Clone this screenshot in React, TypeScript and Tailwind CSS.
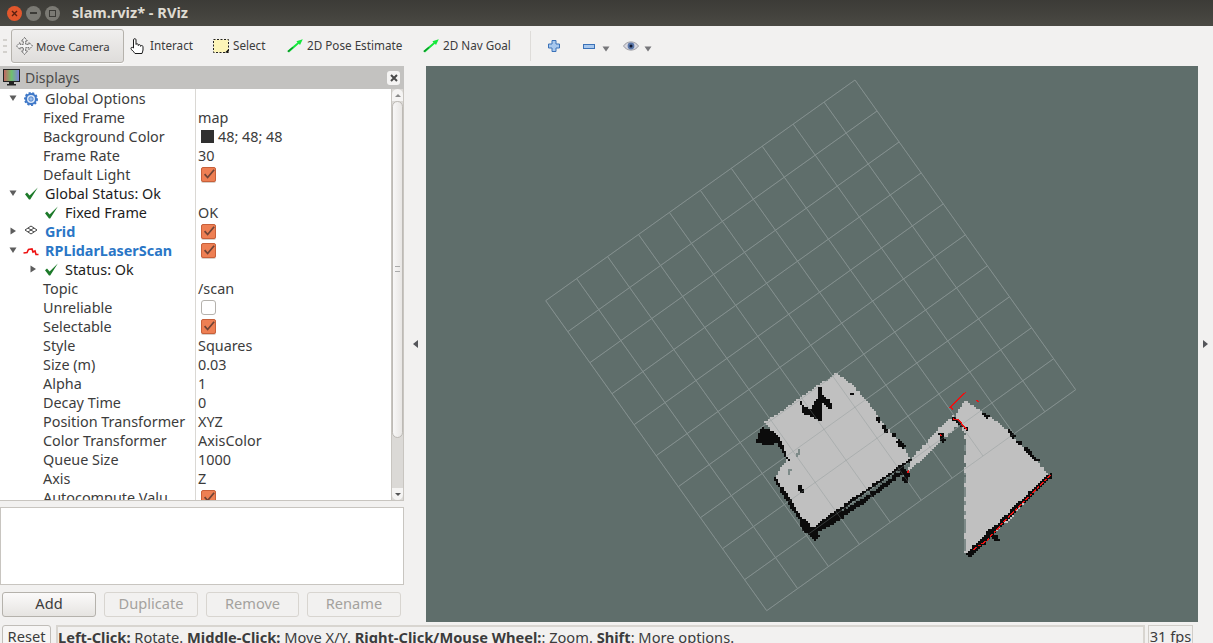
import React from "react";

const Check = () => (
  <svg width="15" height="14" viewBox="0 0 15 14" className="shrink-0">
    <path d="M1 7.2 L3 5.6 L5.6 8.6 L13.8 0.5 L6.2 12.6 L5 12.6 Z" fill="#1d7a2a" />
  </svg>
);

const Arrow = ({ open }: { open: boolean }) => (
  <svg width="8" height="8" viewBox="0 0 8 8" className="shrink-0">
    {open ? <path d="M0.5 1.5 H7.5 L4 7 Z" fill="#5d5d5d" /> : <path d="M1.5 0.5 V7.5 L7 4 Z" fill="#5d5d5d" />}
  </svg>
);

const Gear = () => (
  <svg width="14" height="14" viewBox="0 0 14 14" className="shrink-0">
    <circle cx="7" cy="7" r="5" fill="#dce8f8" stroke="#3f78c8" strokeWidth="2" />
    <circle cx="7" cy="7" r="6" fill="none" stroke="#3f78c8" strokeWidth="2" strokeDasharray="2 1.6" />
    <circle cx="7" cy="7" r="2.2" fill="#9cbcea" stroke="#3f78c8" strokeWidth="0.8" />
  </svg>
);

const GridIcon = () => (
  <svg width="14" height="10" viewBox="0 0 14 10" className="shrink-0">
    <path d="M7 1 L13 5 L7 9 L1 5 Z M4 3 L10 7 M10 3 L4 7" fill="none" stroke="#444" strokeWidth="1" />
  </svg>
);

const Laser = () => (
  <svg width="16" height="12" viewBox="0 0 16 12" className="shrink-0">
    <path d="M0.5 9 L4 8.5 L5.5 5.5 L9 5 L10 8 L12 7 L13 10.5 L15.5 10.5" fill="none" stroke="#ee1111" strokeWidth="1.6" />
  </svg>
);

const Box = ({ on = true }: { on?: boolean }) =>
  on ? (
    <span className="ml-[3px] flex h-[15px] w-[15px] items-center justify-center rounded-[2px] border border-[#c8603a] bg-[#ee7f53] shadow-[0_1px_0_#d8cfc8]">
      <svg width="15" height="15" viewBox="0 0 15 15">
        <path d="M3 7 L6.5 11 L14 2" fill="none" stroke="#6f4436" strokeWidth="2" />
      </svg>
    </span>
  ) : (
    <span className="ml-[3px] block h-[15px] w-[15px] rounded-[3px] border border-[#b5b2ad] bg-white" />
  );

type Row = {
  label: string;
  indent: number;
  arrow?: "open" | "closed";
  arrowAt?: number;
  icon?: React.ReactNode;
  value?: React.ReactNode;
  cls?: string;
};

const rows: Row[] = [
  { label: "Global Options", indent: 45, arrow: "open", arrowAt: 9, icon: <Gear /> },
  { label: "Fixed Frame", indent: 43, value: "map" },
  {
    label: "Background Color",
    indent: 43,
    value: (
      <span className="flex items-center gap-[4px] pl-[3px]">
        <span className="block h-[13px] w-[13px] bg-[#303030]" />
        48; 48; 48
      </span>
    ),
  },
  { label: "Frame Rate", indent: 43, value: "30" },
  { label: "Default Light", indent: 43, value: <Box /> },
  { label: "Global Status: Ok", indent: 45, arrow: "open", arrowAt: 9, icon: <Check />, cls: "text-[#1c1c1c]" },
  { label: "Fixed Frame", indent: 65, icon: <Check />, value: "OK", cls: "text-[#1c1c1c]" },
  { label: "Grid", indent: 45, arrow: "closed", arrowAt: 9, icon: <GridIcon />, value: <Box />, cls: "font-bold text-[#2a76c6]" },
  { label: "RPLidarLaserScan", indent: 45, arrow: "open", arrowAt: 9, icon: <Laser />, value: <Box />, cls: "font-bold text-[#2a76c6]" },
  { label: "Status: Ok", indent: 65, arrow: "closed", arrowAt: 29, icon: <Check />, cls: "text-[#1c1c1c]" },
  { label: "Topic", indent: 43, value: "/scan" },
  { label: "Unreliable", indent: 43, value: <Box on={false} /> },
  { label: "Selectable", indent: 43, value: <Box /> },
  { label: "Style", indent: 43, value: "Squares" },
  { label: "Size (m)", indent: 43, value: "0.03" },
  { label: "Alpha", indent: 43, value: "1" },
  { label: "Decay Time", indent: 43, value: "0" },
  { label: "Position Transformer", indent: 43, value: "XYZ" },
  { label: "Color Transformer", indent: 43, value: "AxisColor" },
  { label: "Queue Size", indent: 43, value: "1000" },
  { label: "Axis", indent: 43, value: "Z" },
  { label: "Autocompute Valu", indent: 43, value: <Box /> },
];

const TreeRow = ({ r }: { r: Row }) => {
  const iconLeft = r.indent === 65 ? 44 : r.label === "RPLidarLaserScan" ? 23 : 24;
  return (
    <div className="flex h-[19px] shrink-0 items-center">
      <div className={"relative flex h-[19px] w-[195px] shrink-0 items-center whitespace-nowrap " + (r.cls ?? "")} style={{ paddingLeft: r.indent }}>
        {r.arrow && (
          <span className="absolute top-[5px]" style={{ left: r.arrowAt }}>
            <Arrow open={r.arrow === "open"} />
          </span>
        )}
        {r.icon && (
          <span className="absolute top-[3px]" style={{ left: iconLeft }}>
            {r.icon}
          </span>
        )}
        {r.label}
      </div>
      <div className="flex h-[19px] flex-1 items-center border-l border-[#dad8d4] pl-[2px]">{r.value}</div>
    </div>
  );
};

const PoseArrow = () => (
  <svg width="16" height="14" viewBox="0 0 16 14" className="shrink-0">
    <path d="M0.5 11.8 L10.5 3.6 L9.4 2.2 L15.8 0.2 L13 6 L11.9 4.7 L2 13.5 Z" fill="#16e83c" />
    <path d="M0.8 12.8 L6 8.4" stroke="#0e8a2a" strokeWidth="1.2" />
  </svg>
);

const ToolItem = ({ w, icon, label }: { w: string; icon: React.ReactNode; label: string }) => (
  <div className={"flex h-[34px] shrink-0 items-center gap-[4px] " + w}>
    {icon}
    <span className="whitespace-nowrap">{label}</span>
  </div>
);

const SmallDown = () => (
  <svg width="8" height="6" viewBox="0 0 8 6" className="mt-[6px] shrink-0">
    <path d="M0.5 0.5 H7.5 L4 5.5 Z" fill="#77777a" />
  </svg>
);

const Btn = ({ label, w, off }: { label: string; w: string; off?: boolean }) => (
  <div
    className={
      "flex h-[25px] items-center justify-center rounded-[3px] border " +
      w +
      (off
        ? " border-[#d8d5d0] bg-[#f2f1f0] text-[#a4a29e]"
        : " border-[#b5b2ac] bg-gradient-to-b from-[#fbfafa] to-[#e6e4e1] text-[#3c3c3c]")
    }
  >
    {label}
  </div>
);

const gridLines = () => {
  const T = [855, 81];
  const L = [545.7, 301.7];
  const B = [766.7, 611.7];
  const R = [1075.7, 390.7];
  const out: string[] = [];
  for (let i = 0; i <= 10; i++) {
    const t = i / 10;
    const a = [L[0] + (T[0] - L[0]) * t, L[1] + (T[1] - L[1]) * t];
    const b = [B[0] + (R[0] - B[0]) * t, B[1] + (R[1] - B[1]) * t];
    out.push(`M${a[0] - 426} ${a[1] - 67} L${b[0] - 426} ${b[1] - 67}`);
    const c = [L[0] + (B[0] - L[0]) * t, L[1] + (B[1] - L[1]) * t];
    const d = [T[0] + (R[0] - T[0]) * t, T[1] + (R[1] - T[1]) * t];
    out.push(`M${c[0] - 426} ${c[1] - 67} L${d[0] - 426} ${d[1] - 67}`);
  }
  return out.join(" ");
};

type Pt = number[];
const hash = (x: number, y: number) => {
  const s = Math.sin(x * 12.9898 + y * 78.233) * 43758.5453;
  return s - Math.floor(s);
};
const inPoly = (x: number, y: number, p: Pt[]) => {
  let c = false;
  for (let i = 0, j = p.length - 1; i < p.length; j = i++) {
    const [xi, yi] = p[i];
    const [xj, yj] = p[j];
    if (yi > y !== yj > y && x < ((xj - xi) * (y - yi)) / (yj - yi) + xi) c = !c;
  }
  return c;
};
const segHit = (x: number, y: number, s: number[]) => {
  const [x1, y1, x2, y2, r, dens] = s;
  const dx = x2 - x1;
  const dy = y2 - y1;
  const len2 = dx * dx + dy * dy;
  const t = Math.max(0, Math.min(1, ((x - x1) * dx + (y - y1) * dy) / len2));
  const d = Math.hypot(x - (x1 + t * dx), y - (y1 + t * dy));
  if (d > r) return false;
  const chunk = Math.floor((t * Math.sqrt(len2)) / 14);
  return hash(chunk + x1, chunk * 3 + y1) < dens;
};

const light: Pt[][] = [
  [[288,42],[345,85],[395,145],[430,190],[470,240],[515,300],[480,330],[340,420],[222,525],[185,490],[105,358],[140,300],[75,190]],
  [[500,342],[515,300],[600,205],[640,172],[662,192],[612,240],[520,325]],
  [[640,178],[675,125],[735,165],[800,210],[930,350],[810,480],[690,590],[672,580],[675,225],[660,200]],
];
const blackPolys: Pt[][] = [
  [[235,85],[245,88],[245,105],[270,125],[278,148],[262,150],[248,130],[245,185],[228,180],[205,170],[188,160],[180,122],[195,145],[210,150],[225,130],[235,110]],
  [[65,205],[100,215],[120,240],[150,310],[135,295],[110,250],[90,260],[60,255],[48,250],[55,225]],
  [[330,98],[344,102],[340,112],[330,108]],
  [[598,222],[608,225],[618,245],[608,252],[596,235]],
];
const blackSegs: number[][] = [
  [105,358,125,390,5,0.8],[125,390,190,495,6,0.95],[335,425,512,302,4,1],[240,495,330,430,5,1],
  [215,520,300,470,11,1],[300,470,400,405,7,0.9],[400,405,490,335,6,1],[190,495,225,530,13,1],
  [395,155,440,215,7,0.55],[440,200,495,270,7,0.6],[795,205,905,320,6,0.65],
  [930,350,850,425,6,1],[850,425,760,515,7,1],[760,515,690,585,9,1],[640,178,682,212,5,1],
  [489,358,497,366,5,1],[178,385,186,393,6,1],[485,330,499,350,9,1],[735,168,742,174,6,1],[752,520,768,540,8,1],
];
const holeSegs: number[][] = [
  [187,256,145,345,3.5,0.6],[672,230,674,570,4.5,0.55],
];

const buildMap = () => {
  const cell = 6;
  let lightPath = "";
  let blackPath = "";
  let holePath = "";
  for (let y = 36; y < 600; y += cell) {
    for (let x = 42; x < 942; x += cell) {
      const cx = x + cell / 2 + (hash(x, y) - 0.5) * 4;
      const cy = y + cell / 2 + (hash(y, x) - 0.5) * 4;
      const rect = `M${x} ${y}h${cell}v${cell}h${-cell}z`;
      const isBlack = blackPolys.some((p) => inPoly(cx, cy, p)) || blackSegs.some((s) => segHit(cx, cy, s));
      if (isBlack) {
        blackPath += rect;
        continue;
      }
      if (light.some((p) => inPoly(cx, cy, p))) {
        if (holeSegs.some((s) => segHit(x + 3, y + 3, s))) holePath += rect;
        else lightPath += rect;
      }
    }
  }
  return { lightPath, blackPath, holePath };
};
const mapPaths = buildMap();

const MapDrawing = () => (
  <svg width="772" height="555" viewBox="0 0 772 555" className="block">
    <path d={gridLines()} fill="none" stroke="#84908e" strokeWidth="1" />
    <g transform="translate(314 293) scale(0.33333)" shapeRendering="crispEdges">
      <path d={mapPaths.lightPath} fill="#c0c0c0" />
      <path d={mapPaths.holePath} fill="#7d8a88" />
      <path d={mapPaths.blackPath} fill="#0c0c0c" />
    </g>
    <path d={gridLines()} fill="none" stroke="#84908e" strokeWidth="1" opacity="0.35" />
    <g transform="translate(314 293) scale(0.33333)" shapeRendering="crispEdges">
      <g fill="none" stroke="#ee1111" strokeWidth="4">
        <path d="M678 99 L631 145 L640 152" />
        <path d="M710 122 L716 130" />
        <path d="M638 180 L655 182 L680 212" />
        <path d="M505 332 L504 342" />
        <path d="M932 348 L880 400 L820 460 L790 490 L740 545 L700 572" strokeDasharray="14 4 8 5" />
        <path d="M600 226 L604 232" />
      </g>
    </g>
  </svg>
);

export default function App() {
  return (
    <div className="flex h-[643px] w-[1213px] flex-col overflow-hidden bg-[#f2f1f0] font-['Noto_Sans',sans-serif] text-[14.4px] text-[#3c3c3c]">
      {/* title bar */}
      <div className="flex h-[26px] shrink-0 items-center bg-gradient-to-b from-[#3c3b37] to-[#4a4943] pl-[7px]">
        <span className="flex h-[15px] w-[15px] items-center justify-center rounded-full bg-[#e2572c] text-white">
          <svg width="7" height="7" viewBox="0 0 7 7"><path d="M1 1 L6 6 M6 1 L1 6" stroke="#5a2010" strokeWidth="1.4" /></svg>
        </span>
        <span className="ml-[4px] flex h-[15px] w-[15px] items-center justify-center rounded-full bg-[#7b7a74]">
          <span className="block h-[1.5px] w-[7px] bg-[#3c3b37]" />
        </span>
        <span className="ml-[4px] flex h-[15px] w-[15px] items-center justify-center rounded-full bg-[#7b7a74]">
          <span className="block h-[7px] w-[7px] border border-[#3c3b37]" />
        </span>
        <span className="ml-[12px] text-[14.6px] font-bold text-[#dfdbd2]">slam.rviz* - RViz</span>
      </div>

      {/* toolbar */}
      <div className="flex h-[40px] shrink-0 items-center pl-[3px] text-[11.7px]">
        <div className="flex h-[14px] w-[8px] shrink-0 flex-col justify-between">
          <span className="block h-[2px] w-[4px] bg-[#d3d1cd]" />
          <span className="block h-[2px] w-[4px] bg-[#d3d1cd]" />
          <span className="block h-[2px] w-[4px] bg-[#d3d1cd]" />
        </div>
        <div className="flex h-[34px] w-[113px] shrink-0 items-center gap-[3px] rounded-[3px] border border-[#b5b2ac] bg-gradient-to-b from-[#f0efee] to-[#dfdddb] pl-[4px] pr-0 shadow-[0_1px_0_#fff]">
          <svg width="17" height="18" viewBox="0 0 17 18" className="shrink-0">
            <path d="M8.5 0.5 L11.5 4 H9.7 V7.3 H13 V5.5 L16.5 9 L13 12.5 V10.7 H9.7 V14 H11.5 L8.5 17.5 L5.5 14 H7.3 V10.7 H4 V12.5 L0.5 9 L4 5.5 V7.3 H7.3 V4 H5.5 Z" fill="#f4f4f4" stroke="#555" strokeWidth="0.9" strokeDasharray="2 0.6" />
          </svg>
          <span className="mt-[2px] whitespace-nowrap text-[11.4px]">Move Camera</span>
        </div>
        <div className="w-[6px] shrink-0" />
        <ToolItem
          w="w-[83px]"
          label="Interact"
          icon={
            <svg width="16" height="16" viewBox="0 0 16 16" className="shrink-0">
              <path d="M3.5 10 V1.8 C3.5 0.3 6 0.3 6 1.8 V6.5 C6 5.5 8.3 5.5 8.3 6.8 V7.5 C8.3 6.3 10.6 6.3 10.6 7.8 V8.3 C10.6 7.2 13 7.2 13 8.8 V12 C13 13.5 12 14.5 12 15.5 H5 C4.5 14 1 12 1 10.5 C1 9 2.5 9 3.5 10 Z" fill="#fff" stroke="#1a1a1a" strokeWidth="1" />
            </svg>
          }
        />
        <ToolItem
          w="w-[74px]"
          label="Select"
          icon={
            <svg width="16" height="14" viewBox="0 0 16 14" className="shrink-0">
              <rect x="0.5" y="0.5" width="15" height="13" fill="#fdf5b8" stroke="#222" strokeWidth="1" strokeDasharray="2 1.5" />
              <path d="M12 13.5 L15.5 13.5 L15.5 10 Z" fill="#111" />
            </svg>
          }
        />
        <ToolItem w="w-[136px]" label="2D Pose Estimate" icon={<PoseArrow />} />
        <ToolItem w="w-[107px]" label="2D Nav Goal" icon={<PoseArrow />} />
        <div className="h-[30px] w-px shrink-0 bg-[#dedcd9]" />
        <svg width="12" height="12" viewBox="0 0 12 12" className="ml-[17px] shrink-0">
          <path d="M4 0.5 H8 V4 H11.5 V8 H8 V11.5 H4 V8 H0.5 V4 H4 Z" fill="#a8c8ee" stroke="#3b72b8" strokeWidth="1" />
        </svg>
        <svg width="12" height="5" viewBox="0 0 12 5" className="ml-[23px] shrink-0">
          <rect x="0.5" y="0.5" width="11" height="4" fill="#a8c8ee" stroke="#3b72b8" strokeWidth="1" />
        </svg>
        <span className="ml-[7px] shrink-0"><SmallDown /></span>
        <svg width="16" height="12" viewBox="0 0 16 12" className="ml-[13px] shrink-0">
          <path d="M0.5 6 C4 0.5 12 0.5 15.5 6 C12 11.5 4 11.5 0.5 6 Z" fill="#d8d8e0" stroke="#8a8a92" strokeWidth="0.8" />
          <circle cx="8" cy="6" r="3.4" fill="#5a76a8" />
          <circle cx="8" cy="6" r="1.5" fill="#101830" />
        </svg>
        <span className="ml-[5px] shrink-0"><SmallDown /></span>
      </div>

      {/* main */}
      <div className="flex min-h-0 flex-1">
        <div className="flex w-[404px] shrink-0 flex-col">
          {/* dock title */}
          <div className="flex h-[23px] shrink-0 items-center bg-[#c3c2c0] pl-[3px] pr-[4px]">
            <svg width="17" height="17" viewBox="0 0 17 17" className="shrink-0">
              <defs>
                <linearGradient id="scr" x1="0" x2="1" y1="0" y2="0">
                  <stop offset="0" stopColor="#c86060" />
                  <stop offset="0.5" stopColor="#70c070" />
                  <stop offset="1" stopColor="#8080e0" />
                </linearGradient>
              </defs>
              <rect x="0.5" y="0.5" width="16" height="12" fill="url(#scr)" stroke="#222" />
              <path d="M6 13 H11 V15 H13 V16.5 H4 V15 H6 Z" fill="#222" />
            </svg>
            <span className="ml-[5px] flex-1 text-[14px] text-[#4a4a4a]">Displays</span>
            <span className="flex h-[14px] w-[13px] items-center justify-center rounded-[3px] bg-[#f5f4f3]">
              <svg width="8" height="8" viewBox="0 0 8 8"><path d="M1 1 L7 7 M7 1 L1 7" stroke="#4a4a4a" strokeWidth="2" /></svg>
            </span>
          </div>
          {/* tree */}
          <div className="flex h-[412px] shrink-0 overflow-hidden border-b border-[#c8c5c0]">
            <div className="flex w-[391px] shrink-0 flex-col overflow-hidden bg-white">
              {rows.map((r, i) => (
                <TreeRow key={i} r={r} />
              ))}
            </div>
            <div className="flex w-[13px] shrink-0 flex-col border-x border-[#c8c5c0] bg-[#dbd9d6]">
              <div className="flex h-[12px] shrink-0 items-center justify-center rounded-t-[6px] bg-[#f5f4f3]">
                <span className="block h-0 w-0 border-x-[3px] border-b-[3px] border-x-transparent border-b-[#8a8a8a]" />
              </div>
              <div className="relative h-[337px] shrink-0 rounded-[6px] border border-[#bdbab5] bg-gradient-to-r from-[#f8f7f7] to-[#e8e6e4]">
                <span className="absolute left-[2px] top-[164px] block h-[6px] w-[5px] border-y border-[#aaa]" />
              </div>
              <div className="flex-1" />
              <div className="flex h-[12px] shrink-0 items-center justify-center rounded-b-[6px] bg-[#f5f4f3]">
                <span className="block h-0 w-0 border-x-[3px] border-t-[3px] border-x-transparent border-t-[#555]" />
              </div>
            </div>
          </div>
          <div className="h-[6px] shrink-0" />
          <div className="h-[78px] shrink-0 border border-[#c8c5c0] bg-white" />
          <div className="flex h-[38px] shrink-0 items-center justify-start gap-[8px] pl-[2px] text-[14.6px]">
            <Btn label="Add" w="w-[94px]" />
            <Btn label="Duplicate" w="w-[94px]" off />
            <Btn label="Remove" w="w-[93px]" off />
            <Btn label="Rename" w="w-[94px]" off />
          </div>
        </div>
        <div className="flex w-[22px] shrink-0 items-center justify-center">
          <span className="mb-[1px] block h-0 w-0 border-y-[4px] border-r-[5px] border-y-transparent border-r-[#55565a]" />
        </div>
        <div className="h-[556px] w-[772px] shrink-0 bg-[#5f6e6b]">
          <MapDrawing />
        </div>
        <div className="flex flex-1 items-center justify-center">
          <span className="mb-[1px] block h-0 w-0 border-y-[4px] border-l-[5px] border-y-transparent border-l-[#55565a]" />
        </div>
      </div>

      {/* status */}
      <div className="flex h-[20px] shrink-0 items-start gap-[3px] overflow-visible pl-[2px] pt-[2px] text-[14.65px]">
        <div className="flex h-[22px] w-[49px] shrink-0 items-start justify-center rounded-t-[3px] border border-[#c0bdb8] bg-[#f7f6f5]">Reset</div>
        <div className="ml-[2px] flex h-[22px] w-[1089px] shrink-0 items-start whitespace-pre border-2 border-b-0 border-[#d8d5d0] text-[#3c3c3c]">
          <b>Left-Click:</b> Rotate. <b>Middle-Click:</b> Move X/Y. <b>Right-Click/Mouse Wheel:</b>: Zoom. <b>Shift</b>: More options.
        </div>
        <div className="flex h-[22px] w-[45px] shrink-0 items-start justify-center whitespace-nowrap border border-b-0 border-[#d0cdc8]">31 fps</div>
      </div>
    </div>
  );
}
